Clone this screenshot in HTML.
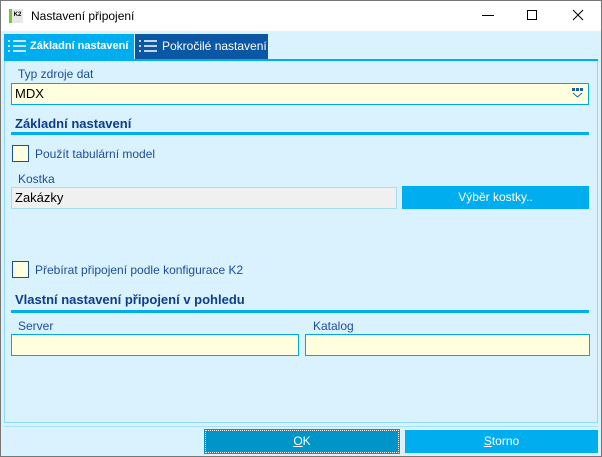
<!DOCTYPE html>
<html><head><meta charset="utf-8"><style>
*{margin:0;padding:0;box-sizing:border-box}
body{width:602px;height:457px;overflow:hidden;font-family:"Liberation Sans",sans-serif;font-size:12px;background:#d9f2fd;position:relative}
.a{position:absolute;white-space:nowrap}
.win{left:0;top:0;width:602px;height:457px;border:1px solid #777;}
.title{left:1px;top:1px;width:600px;height:30px;background:#fff}
.lbl{color:#1e4d9a;font-size:12px}
.inp{background:#ffffe0;border:1px solid #00a8e8}
.hd{color:#0b3f8c;font-weight:bold;font-size:13px}
.line{background:#00aeef;height:3px}
.cb{width:17px;height:17px;border:1px solid #1a4f9a;background:#ffffe0}
.btn{background:#00aeef;color:#fff;text-align:center;font-size:12px}
</style></head><body>
<div class="a win"></div>
<div class="a title"></div>
<div class="a" style="left:9px;top:9px;width:14px;height:14px;background:#e8e8e8;border-left:3px solid #7cc242;font-size:6px;font-weight:bold;line-height:13px;text-align:center">K2</div>
<div class="a" style="left:31px;top:9px;font-size:12px;color:#000">Nastavení připojení</div>
<div class="a" style="left:482px;top:15px;width:12px;height:1px;background:#000"></div>
<div class="a" style="left:527px;top:10px;width:10px;height:10px;border:1px solid #000"></div>
<svg class="a" style="left:572px;top:9px" width="12" height="12"><path d="M1 1L11 11M11 1L1 11" stroke="#000" stroke-width="1"/></svg>
<!-- tabs -->
<div class="a" style="left:4px;top:34px;width:130px;height:25px;background:#00aeef;color:#fff;font-weight:bold;font-size:11px;line-height:25px;padding-left:26px;overflow:hidden">Základní nastavení</div>
<div class="a" style="left:135px;top:34px;width:133px;height:25px;background:#0b57a4;color:#fff;font-size:12px;line-height:25px;padding-left:27px;overflow:hidden">Pokročilé nastavení</div>
<svg class="a" style="left:8px;top:40px" width="20" height="12"><g stroke="#fff" stroke-width="1.5"><path d="M0 1h2M5 1h13M0 6h2M5 6h13M0 11h2M5 11h13"/></g></svg>
<svg class="a" style="left:139px;top:40px" width="20" height="12"><g stroke="#fff" stroke-width="1.5"><path d="M0 1h2M5 1h13M0 6h2M5 6h13M0 11h2M5 11h13"/></g></svg>
<!-- panel -->
<div class="a" style="left:4px;top:59px;width:594px;height:2px;background:#00aeef"></div>
<div class="a" style="left:4px;top:61px;width:594px;height:362px;border:1px solid #8fdaf5;border-top:none"></div>
<div class="a lbl" style="left:18px;top:67px">Typ zdroje dat</div>
<div class="a inp" style="left:11px;top:83px;width:578px;height:22px;font-size:13px;line-height:20px;padding-left:3px;color:#000">MDX</div>
<svg class="a" style="left:572px;top:88px" width="12" height="10"><g fill="#1e5fa8"><rect x="0" y="0" width="3" height="3"/><rect x="4" y="0" width="3" height="3"/><rect x="8" y="0" width="3" height="3"/></g><path d="M1 5L5.5 9L10 5" stroke="#1e5fa8" fill="none"/></svg>
<div class="a hd" style="left:15px;top:116px">Základní nastavení</div>
<div class="a line" style="left:11px;top:132px;width:578px"></div>
<div class="a cb" style="left:12px;top:145px"></div>
<div class="a lbl" style="left:35px;top:147px">Použít tabulární model</div>
<div class="a lbl" style="left:18px;top:172px">Kostka</div>
<div class="a" style="left:11px;top:187px;width:386px;height:22px;background:#f0f0f0;border:1px solid #a8dcf0;font-size:13px;line-height:20px;padding-left:3px">Zakázky</div>
<div class="a btn" style="left:402px;top:186px;width:187px;height:23px;line-height:23px">Výběr kostky..</div>
<div class="a cb" style="left:12px;top:261px"></div>
<div class="a lbl" style="left:35px;top:263px">Přebírat připojení podle konfigurace K2</div>
<div class="a hd" style="left:15px;top:292px">Vlastní nastavení připojení v pohledu</div>
<div class="a line" style="left:11px;top:310px;width:578px"></div>
<div class="a lbl" style="left:18px;top:319px">Server</div>
<div class="a inp" style="left:11px;top:334px;width:288px;height:22px"></div>
<div class="a lbl" style="left:313px;top:319px">Katalog</div>
<div class="a inp" style="left:305px;top:334px;width:285px;height:22px"></div>
<div class="a" style="left:4px;top:426px;width:594px;height:1px;background:#a8e2f8"></div>
<div class="a btn" style="left:205px;top:430px;width:194px;height:23px;background:#0095c8;line-height:21px;border:1px dotted #fff;outline:1px solid #0095c8"><u>O</u>K</div>
<div class="a btn" style="left:405px;top:430px;width:193px;height:23px;line-height:23px"><u>S</u>torno</div>
</body></html>
